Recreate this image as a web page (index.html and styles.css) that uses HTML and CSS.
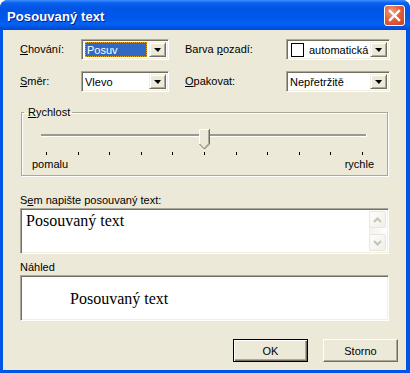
FILE: index.html
```html
<!DOCTYPE html>
<html lang="cs">
<head>
<meta charset="utf-8">
<title>Posouvaný text</title>
<link rel="stylesheet" href="styles.css">
</head>
<body>
<div class="window">
  <div class="titlebar">
    <span class="title">Posouvaný text</span>
    <button class="close" aria-label="Zavřít">
      <svg width="13" height="13" viewBox="0 0 13 13"><path d="M2 2 L11 11 M11 2 L2 11" stroke="#fff" stroke-width="2.4" stroke-linecap="square" fill="none"/></svg>
    </button>
  </div>
  <div class="client">
    <div class="fields">
      <span class="lbl"><u>C</u>hování:</span>
      <div class="combo">
        <div class="combo-val"><span class="sel">Posuv</span></div>
        <div class="dd"><span class="tri"></span></div>
      </div>
      <span></span>
      <span class="lbl">Barva <u>p</u>ozadí:</span>
      <div class="combo">
        <div class="combo-val"><span class="swatch"></span>automatická</div>
        <div class="dd"><span class="tri"></span></div>
      </div>

      <span class="lbl"><u>S</u>měr:</span>
      <div class="combo">
        <div class="combo-val">Vlevo</div>
        <div class="dd"><span class="tri"></span></div>
      </div>
      <span></span>
      <span class="lbl"><u>O</u>pakovat:</span>
      <div class="combo">
        <div class="combo-val">Nepřetržitě</div>
        <div class="dd"><span class="tri"></span></div>
      </div>
    </div>

    <fieldset class="group">
      <legend><u>R</u>ychlost</legend>
      <div class="slider">
        <div class="track"></div>
        <svg class="thumb" width="11" height="21" viewBox="0 0 11 21">
          <path d="M0.5 0.5 H10.5 V15 L5.5 20 L0.5 15 Z" fill="#ECE9D8"/>
          <path d="M0.5 15 V0.5 H10" stroke="#fff" fill="none"/>
          <path d="M10.5 0 V15 L5.5 20 L0.5 15" stroke="#716F64" fill="none"/>
          <path d="M9.5 1 V14.6 L5.5 18.6" stroke="#ACA899" fill="none"/>
        </svg>
      </div>
      <div class="ticks">
        <i></i><i></i><i></i><i></i><i></i><i></i><i></i><i></i><i></i><i></i><i></i>
      </div>
      <div class="scale"><span>pomalu</span><span>rychle</span></div>
    </fieldset>

    <div class="cap">S<u>e</u>m napište posouvaný text:</div>
    <div class="editbox">
      <div class="edittext">Posouvaný text</div>
      <div class="vscroll">
        <div class="sbtn"><svg width="9" height="6" viewBox="0 0 9 6"><path d="M1 5 L4.5 1.5 L8 5" stroke="#C4C3B8" stroke-width="2" fill="none"/></svg></div>
        <div class="strack"></div>
        <div class="sbtn"><svg width="9" height="6" viewBox="0 0 9 6"><path d="M1 1 L4.5 4.5 L8 1" stroke="#C4C3B8" stroke-width="2" fill="none"/></svg></div>
      </div>
    </div>

    <div class="cap cap2">Náhled</div>
    <div class="preview">Posouvaný text</div>

    <div class="buttons">
      <button class="btn default">OK</button>
      <button class="btn">Storno</button>
    </div>
  </div>
</div>
</body>
</html>
```

FILE: styles.css
```css
html, body {
  margin: 0;
  padding: 0;
  background: #ffffff;
}

.window {
  width: 410px;
  height: 373px;
  box-sizing: border-box;
  display: flex;
  flex-direction: column;
  background: #0055E5;
  border-radius: 8px 8px 0 0;
  overflow: hidden;
  font-family: "Liberation Sans", Arial, sans-serif;
  font-size: 11px;
  color: #000;
}

.titlebar {
  height: 30px;
  flex: none;
  display: flex;
  align-items: center;
  padding: 0 5px 0 7px;
  background: linear-gradient(to bottom, #3C8EFF 0px, #0A61EE 3px, #0055E5 9px, #0058EB 18px, #0362F2 24px, #0050DC 28px, #0046D0 30px);
}

.title {
  flex: 1;
  color: #fff;
  font-weight: bold;
  font-size: 13px;
  text-shadow: 1px 1px 0 #0A1E8C;
  letter-spacing: 0.1px;
  padding-top: 2px;
}

.close {
  width: 21px;
  height: 21px;
  padding: 0;
  margin: 1px 0 0 0;
  border: 1px solid #fff;
  border-radius: 3px;
  background: radial-gradient(circle at 35% 30%, #F0A085 0%, #E2603F 45%, #C8401E 100%);
  display: flex;
  align-items: center;
  justify-content: center;
}

.client {
  flex: 1;
  margin: 0 4px 3px 3px;
  background: #ECE9D8;
  padding: 9px 0 0 17px;
}

/* top fields */
.fields {
  display: grid;
  grid-template-columns: 61px 88px 16px 101px 104px;
  grid-auto-rows: 21px;
  row-gap: 11px;
  align-items: center;
}

.lbl {
  line-height: 13px;
}

.combo {
  box-sizing: border-box;
  height: 21px;
  display: flex;
  border: 1px solid;
  border-color: #ACA899 #fff #fff #ACA899;
  box-shadow: inset 1px 1px 0 #716F64, inset -1px -1px 0 #F1EFE2;
  background: #fff;
  padding: 2px;
}

.combo-val {
  flex: 1;
  display: flex;
  align-items: center;
  padding-left: 1px;
  white-space: nowrap;
  overflow: hidden;
}

.sel {
  box-sizing: border-box;
  flex: 1;
  align-self: stretch;
  margin-right: 2px;
  display: flex;
  align-items: center;
  padding-left: 1px;
  background: #316AC5;
  color: #fff;
  border: 1px dotted #E8A21C;
  outline: 1px solid #316AC5;
  outline-offset: -1px;
}

.sel {
  outline: none;
}

.swatch {
  width: 11px;
  height: 12px;
  border: 1px solid #000;
  background: #fff;
  margin: 0 5px 0 1px;
  flex: none;
}

.dd {
  box-sizing: border-box;
  width: 17px;
  flex: none;
  background: #ECE9D8;
  border: 1px solid;
  border-color: #F1EFE2 #716F64 #716F64 #F1EFE2;
  box-shadow: inset 1px 1px 0 #fff, inset -1px -1px 0 #ACA899;
  display: flex;
  align-items: center;
  justify-content: center;
}

.tri {
  width: 0;
  height: 0;
  border-left: 4px solid transparent;
  border-right: 3px solid transparent;
  border-top: 4px solid #000;
  margin-top: 1px;
}

/* group box */
.group {
  box-sizing: border-box;
  width: 367px;
  margin: 14px 0 0 1px;
  padding: 0 0 4px 0;
  border: 1px solid #ACA899;
  box-shadow: inset 1px 1px 0 #fff, 1px 1px 0 #fff;
  min-width: 0;
}

.group legend {
  padding: 0 2px 0 4px;
  margin-left: 2px;
  line-height: 13px;
}

.slider {
  position: relative;
  height: 30px;
  margin: 0 20px 0 19px;
}

.track {
  position: absolute;
  left: 0;
  right: 0;
  top: 15px;
  height: 2px;
  background: #9D9A8C;
  border-bottom: 1px solid #fff;
  border-right: 1px solid #fff;
}

.thumb {
  position: absolute;
  left: 158px;
  top: 10px;
}

.ticks {
  display: flex;
  justify-content: space-between;
  width: 317px;
  margin: 3px 0 0 24px;
  height: 3px;
}

.ticks i {
  display: block;
  width: 1px;
  height: 3px;
  background: #000;
}

.scale {
  display: flex;
  justify-content: space-between;
  line-height: 13px;
  padding: 0 13px 0 10px;
  margin-top: 3px;
}

/* edit + preview */
.cap {
  line-height: 13px;
  margin-top: 18px;
  height: 14px;
}

.cap2 {
  margin-top: 7px;
}

.editbox {
  box-sizing: border-box;
  width: 369px;
  height: 46px;
  display: flex;
  border: 1px solid;
  border-color: #ACA899 #fff #fff #ACA899;
  box-shadow: inset 1px 1px 0 #716F64, inset -1px -1px 0 #F1EFE2;
  background: #fff;
  padding: 2px;
}

.edittext {
  flex: 1;
  font-family: "Liberation Serif", "Times New Roman", serif;
  font-size: 16px;
  line-height: 18px;
  padding: 1px 0 0 3px;
}

.vscroll {
  width: 17px;
  display: flex;
  flex-direction: column;
  background: linear-gradient(to right, #F3F1EC, #FEFEFB);
}

.sbtn {
  box-sizing: border-box;
  height: 17px;
  border: 1px solid #E8E6DD;
  border-radius: 2px;
  background: linear-gradient(to bottom right, #FDFDFB, #F0EFE8);
  display: flex;
  align-items: center;
  justify-content: center;
}

.strack {
  flex: 1;
}

.preview {
  box-sizing: border-box;
  width: 369px;
  height: 46px;
  background: #fff;
  border: 1px solid;
  border-color: #ACA899 #fff #fff #ACA899;
  box-shadow: inset 1px 1px 0 #716F64, inset -1px -1px 0 #F1EFE2;
  font-family: "Liberation Serif", "Times New Roman", serif;
  font-size: 16px;
  display: flex;
  align-items: center;
  padding-left: 49px;
  padding-top: 1px;
}

.buttons {
  display: flex;
  justify-content: flex-end;
  gap: 15px;
  margin-top: 18px;
  padding-right: 8px;
}

.btn {
  box-sizing: border-box;
  width: 75px;
  height: 23px;
  padding: 0;
  font-family: "Liberation Sans", Arial, sans-serif;
  font-size: 11px;
  color: #000;
  background: #ECE9D8;
  border: 1px solid;
  border-color: #fff #716F64 #716F64 #fff;
  box-shadow: inset -1px -1px 0 #ACA899;
}

.btn.default {
  border: 1px solid #000;
  box-shadow: inset 1px 1px 0 #fff, inset -1px -1px 0 #716F64, inset -2px -2px 0 #ACA899;
}
```
